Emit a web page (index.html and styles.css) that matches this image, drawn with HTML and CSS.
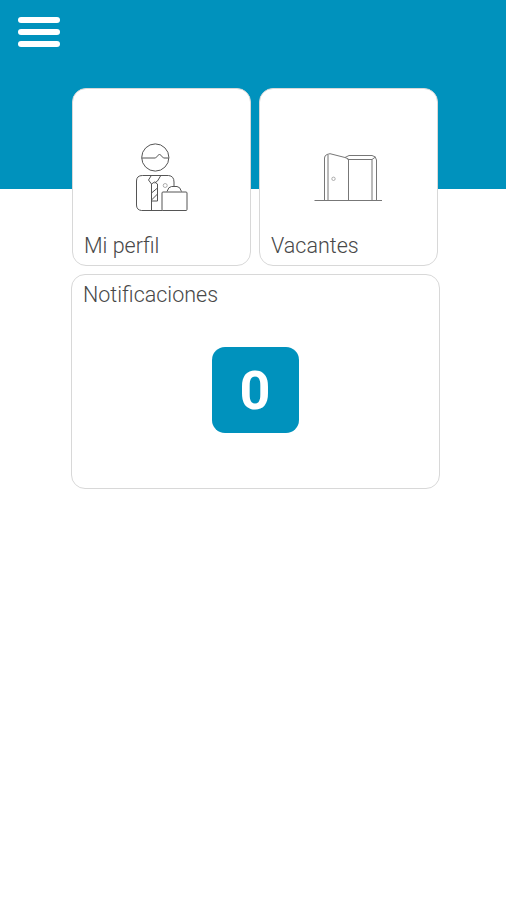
FILE: index.html
```html
<!DOCTYPE html>
<html lang="es">
<head>
<meta charset="utf-8">
<title>Inicio</title>
<link rel="stylesheet" href="styles.css">
</head>
<body>
<header class="topbar">
  <button class="menu" aria-label="Menú"><span></span><span></span><span></span></button>
</header>
<main class="dashboard">
  <div class="tiles">
    <a class="card tile">
      <svg class="icon" width="80" height="90" viewBox="1.5 0 80 90">
        <circle cx="34.8" cy="27.5" r="13.600"/>
        <path d="M21.200 28H35L39 24L43 28H48.400"/>
        <path d="M42 80.500H21Q16 80 16 75V51Q16 45.500 22 45.500H48Q53.500 46 53.500 52V56"/>
        <path d="M30.500 46L28 50L31 54M40 46L37 51L34 53M31 54V80.500M31 54L34 52L37 54V71H31M31 63L37 58M31 70L37 64"/>
        <circle class="soft" cx="44.700" cy="55.500" r="2"/>
        <rect x="41.500" y="62" width="25" height="18.500" rx="1"/>
        <path d="M46.500 61.500Q48 56.500 51 56.500H56.500Q59.500 56.500 61 61.500"/>
      </svg>
      <span class="label">Mi perfil</span>
    </a>
    <a class="card tile">
      <svg class="icon" width="90" height="90" viewBox="-1 0 90 90">
        <path class="base" d="M9.500 70.500H77"/>
        <path class="frame" d="M19.500 70V28Q19.500 25.500 22 24.500L25 23.700L40 27.500L44 25.500H67Q71 26 71.500 30V70"/>
        <path class="frame" d="M23 70V25M42.500 29.500H67V70M43.500 29V70M67 29.500L70.500 27"/>
        <path class="frame" d="M40 27.500L43.500 29"/>
        <circle class="soft" cx="28.500" cy="48.800" r="1.700"/>
      </svg>
      <span class="label">Vacantes</span>
    </a>
  </div>
  <section class="card notifications">
    <h2 class="label">Notificaciones</h2>
    <div class="count">0</div>
  </section>
</main>
</body>
</html>
```
FILE: styles.css
```css
* { box-sizing: border-box; }
body {
  margin: 0;
  min-height: 900px;
  background: linear-gradient(#0092bd 189px, #fff 189px);
  font-family: Roboto, sans-serif;
}
.topbar { height: 88px; padding: 17px 18px; }
.menu {
  display: flex;
  flex-direction: column;
  gap: 6px;
  width: 42px;
  padding: 0;
  border: 0;
  background: none;
}
.menu span { width: 42px; height: 6px; border-radius: 3px; background: #fff; }
.dashboard { width: 369px; margin-left: 71px; }
.card { background: #fff; border: 1.5px solid #d8d8d8; border-radius: 14px; }
.tiles { display: flex; gap: 8px; padding: 0 1px; }
.tile {
  display: flex;
  flex-direction: column;
  align-items: center;
  width: 179px;
  height: 178px;
  padding: 41px 11px 0;
}
.tile .icon { flex: none; height: 90px; }
.tile .label { align-self: flex-start; margin-top: 13px; }
.label {
  margin: 0;
  font-size: 21.5px;
  font-weight: 300;
  line-height: 26px;
  color: #484848;
}
.icon { fill: none; stroke: #555; stroke-width: 1; }
.soft { stroke: #999; stroke-width: .8; }
.frame { stroke: #777; }
.base { stroke: #777; }
.notifications { height: 215px; margin-top: 8px; padding: 7px 12px 7px 11px; }
.count {
  width: 87px;
  height: 86px;
  margin: 39px auto 0;
  border-radius: 13px;
  background: #0092bd;
  color: #fff;
  font-size: 54px;
  font-weight: 700;
  line-height: 88px;
  text-align: center;
}
```
